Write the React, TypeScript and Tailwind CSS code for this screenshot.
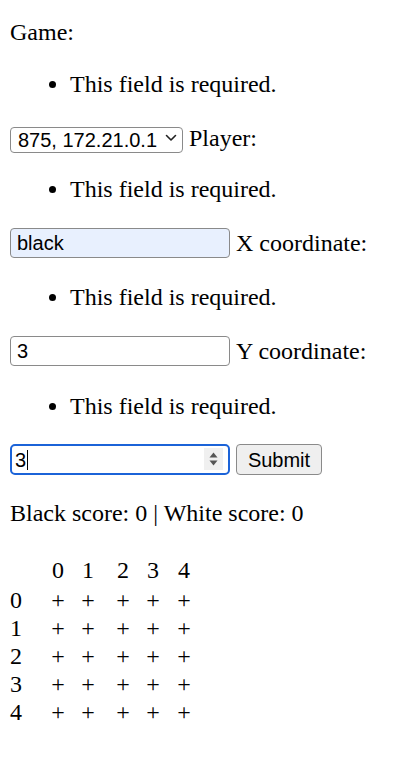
import React, { useState } from "react";

const SIZE = 5;

const ErrorList: React.FC<{ className?: string }> = ({ className = "my-[24px]" }) => (
  <ul className={`${className} list-disc pl-[60px]`}>
    <li>This field is required.</li>
  </ul>
);

const App: React.FC = () => {
  const [game, setGame] = useState("875");
  const [player, setPlayer] = useState("black");
  const [x, setX] = useState("3");
  const [y, setY] = useState("3");

  const rows = Array.from({ length: SIZE }, (_, i) => i);

  return (
    <div className="min-h-screen bg-white px-[10px] pt-[18px] text-[24px] leading-[28px] text-black font-['Liberation_Serif','Times_New_Roman',serif]">
      <form onSubmit={(e) => e.preventDefault()}>
        <div>Game:</div>
        <ErrorList />

        <div className="mt-[27px] flex h-[26px] items-center gap-[6px]">
          <div className="relative h-[26px] w-[173px]">
            <select
              value={game}
              onChange={(e) => setGame(e.target.value)}
              className="h-full w-full appearance-none rounded-[4px] border border-[#8a8a8a] bg-white pl-[7px] text-[20px] leading-[24px] font-['Liberation_Sans',Arial,sans-serif]"
            >
              <option value="875">875, 172.21.0.1</option>
            </select>
            <svg
              className="pointer-events-none absolute right-[6px] top-[8px]"
              width="12"
              height="9"
              viewBox="0 0 12 9"
              fill="none"
              stroke="#222"
              strokeWidth="1.6"
              strokeLinecap="round"
              strokeLinejoin="round"
            >
              <path d="M1.5 2.5 L6 7 L10.5 2.5" />
            </svg>
          </div>
          <label>Player:</label>
        </div>
        <ErrorList />

        <div className="mt-[25px] flex h-[30px] items-center gap-[6px]">
          <input
            type="text"
            value={player}
            onChange={(e) => setPlayer(e.target.value)}
            className="h-[30px] w-[220px] rounded-[4px] border border-[#8a8a8a] bg-[#e8f0fe] pl-[6px] text-[20px] font-['Liberation_Sans',Arial,sans-serif] outline-none"
          />
          <label>X coordinate:</label>
        </div>
        <ErrorList className="mt-[25px] mb-[25px]" />

        <div className="flex h-[30px] items-center gap-[6px]">
          <input
            type="text"
            value={x}
            onChange={(e) => setX(e.target.value)}
            className="h-[30px] w-[220px] rounded-[4px] border border-[#8a8a8a] bg-white pl-[6px] text-[20px] font-['Liberation_Sans',Arial,sans-serif] outline-none"
          />
          <label>Y coordinate:</label>
        </div>
        <ErrorList className="mt-[26px] mb-[24px]" />

        <div className="flex h-[31px] items-center gap-[6px]">
          <div className="relative h-[31px] w-[220px] rounded-[5px] border-[2.5px] border-[#1b63d8] bg-white">
            <div className="flex h-full items-center pl-[3px] text-[20px] font-['Liberation_Sans',Arial,sans-serif]">
              <span>{y}</span>
              <span className="ml-[1px] h-[20px] w-[1px] bg-black" />
            </div>
            <div className="absolute right-[5px] top-[2px] flex h-[22px] w-[19px] flex-col items-center justify-center gap-[2px] bg-[#f0f0f0]">
              <svg width="9" height="6" viewBox="0 0 9 6">
                <path d="M0.5 5.5 L4.5 0.5 L8.5 5.5 Z" fill="#555" />
              </svg>
              <svg width="9" height="6" viewBox="0 0 9 6">
                <path d="M0.5 0.5 L4.5 5.5 L8.5 0.5 Z" fill="#555" />
              </svg>
            </div>
          </div>
          <button
            type="submit"
            className="h-[31px] w-[86px] rounded-[4px] border border-[#8a8a8a] bg-[#efefef] text-[20px] font-['Liberation_Sans',Arial,sans-serif]"
          >
            Submit
          </button>
        </div>
      </form>

      <p className="mt-[24px]">Black score: 0 | White score: 0</p>

      <div className="mt-[29px] grid w-max grid-cols-[33px_30px_30px_40px_20px_42px]">
        <div className="mb-[2px]" />
        {rows.map((c) => (
          <div key={`h${c}`} className="mb-[2px] text-center">
            {c}
          </div>
        ))}
        {rows.map((r) => (
          <React.Fragment key={`r${r}`}>
            <div>{r}</div>
            {rows.map((c) => (
              <div key={`c${r}-${c}`} className="text-center">
                +
              </div>
            ))}
          </React.Fragment>
        ))}
      </div>
    </div>
  );
};

export default App;
